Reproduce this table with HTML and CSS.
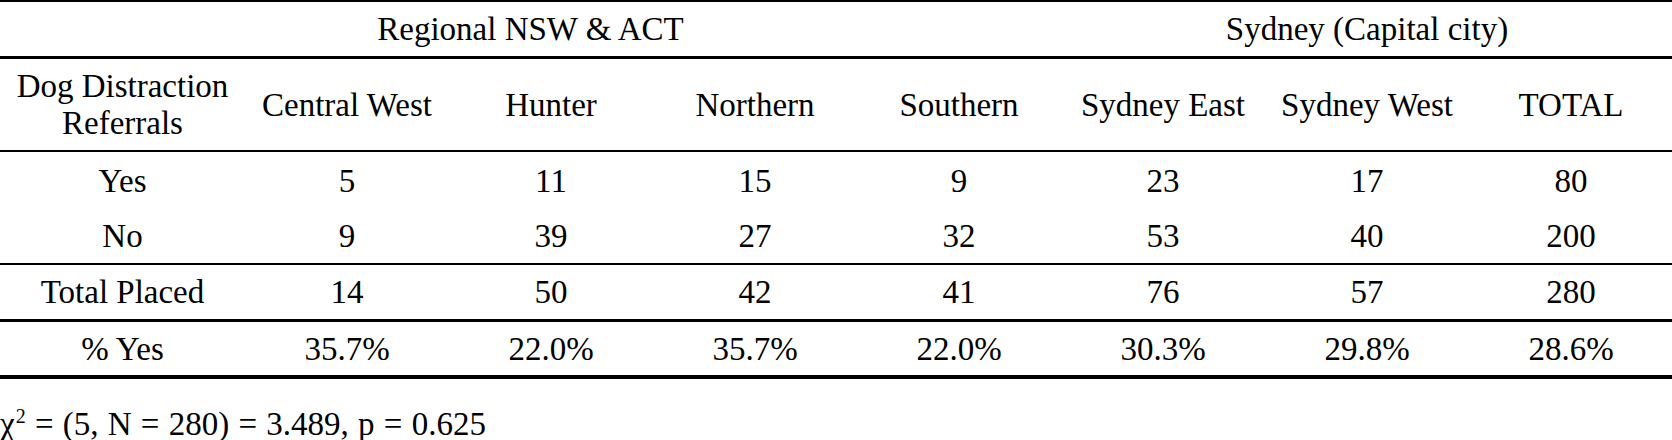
FILE: index.html
```html
<!DOCTYPE html>
<html lang="en">
<head>
  <meta charset="UTF-8" />
  <title>Dog Distraction Referrals by Region</title>
  <link rel="stylesheet" href="styles.css">
</head>
<body>
  <table class="stats">
    <colgroup>
      <col class="col-label" />
      <col class="col-data" span="7" />
    </colgroup>
    <thead>
      <tr class="group-row">
        <th colspan="5">Regional NSW &amp; ACT</th>
        <th colspan="3">Sydney (Capital city)</th>
      </tr>
      <tr class="head-row">
        <th class="label">Dog Distraction<br>Referrals</th>
        <th>Central West</th>
        <th>Hunter</th>
        <th>Northern</th>
        <th>Southern</th>
        <th>Sydney East</th>
        <th>Sydney West</th>
        <th>TOTAL</th>
      </tr>
    </thead>
    <tbody>
      <tr class="row-yes">
        <td>Yes</td><td>5</td><td>11</td><td>15</td><td>9</td><td>23</td><td>17</td><td>80</td>
      </tr>
      <tr class="row-no">
        <td>No</td><td>9</td><td>39</td><td>27</td><td>32</td><td>53</td><td>40</td><td>200</td>
      </tr>
      <tr class="row-total">
        <td>Total Placed</td><td>14</td><td>50</td><td>42</td><td>41</td><td>76</td><td>57</td><td>280</td>
      </tr>
      <tr class="row-pct">
        <td>% Yes</td><td>35.7%</td><td>22.0%</td><td>35.7%</td><td>22.0%</td><td>30.3%</td><td>29.8%</td><td>28.6%</td>
      </tr>
    </tbody>
  </table>
  <p class="note">&chi;<sup>2</sup> = (5, N = 280) = 3.489, p = 0.625</p>
</body>
</html>
```

FILE: styles.css
```css
body {
  margin: 0;
  background: #fff;
  color: #000;
  font-family: "Liberation Serif", "Times New Roman", serif;
  font-size: 33px;
}
.stats {
  width: 1672px;
  table-layout: fixed;
  border-collapse: separate;
  border-spacing: 0;
}
.col-label {
  width: 245px;
}
.col-data {
  width: 204px;
}
.stats th,
.stats td {
  font-weight: normal;
  text-align: center;
  vertical-align: middle;
  line-height: 38px;
  padding: 8px 0;
  white-space: nowrap;
}
.group-row th {
  border-top: 2px solid #000;
  border-bottom: 3px solid #000;
}
.head-row th {
  height: 91px;
  padding: 0;
  border-bottom: 2px solid #000;
}
.head-row .label {
  line-height: 37px;
}
.row-yes td {
  padding: 10px 0 9px;
}
.row-no td {
  border-bottom: 2px solid #000;
}
.row-total td {
  border-bottom: 3px solid #000;
}
.row-pct td {
  padding: 8px 0 7px;
  border-bottom: 4px solid #000;
}
.note {
  margin: 26px 0 0;
  line-height: 38px;
  word-spacing: 1px;
}
.note sup {
  font-size: 20px;
  line-height: 0;
  margin-left: 1px;
}
```
